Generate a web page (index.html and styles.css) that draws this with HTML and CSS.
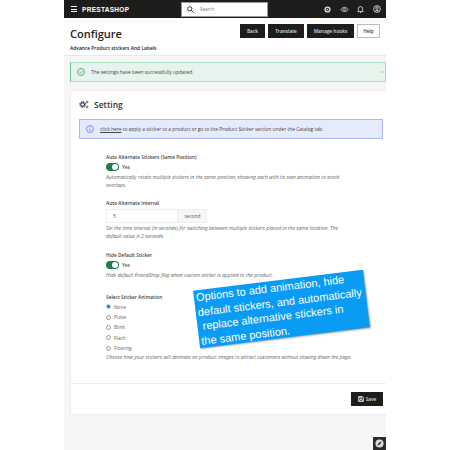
FILE: index.html
```html
<!DOCTYPE html>
<html lang="en">
<head>
    <meta charset="UTF-8">
    <title>Configure</title>
    <link rel="stylesheet" href="styles.css">
</head>
<body>
    <div class="shot">
        <div class="topbar">
            <div class="burger"><span></span><span></span><span></span></div>
            <div class="logo">PRESTASHOP</div>
            <div class="search">
                <svg width="7" height="7" viewBox="0 0 10 10" fill="none" stroke="#333" stroke-width="1.4"><circle cx="4" cy="4" r="3"/><path d="M6.2 6.2L9.5 9.5"/></svg>
                <span>Search</span>
            </div>
            <div class="top-icons">
                <svg width="7" height="7" viewBox="0 0 10 10"><circle cx="5" cy="5" r="3.4" fill="none" stroke="#ddd" stroke-width="2"/><circle cx="5" cy="5" r="1.2" fill="#ddd"/></svg>
                <svg width="9" height="7" viewBox="0 0 12 10" fill="none" stroke="#ddd" stroke-width="1.2"><path d="M1 5c2-4 8-4 10 0c-2 4-8 4-10 0z"/><circle cx="6" cy="5" r="1.6"/></svg>
                <svg width="7" height="8" viewBox="0 0 10 11" fill="none" stroke="#ddd" stroke-width="1.2"><path d="M2 8V5a3 3 0 0 1 6 0v3l1 1H1z"/><path d="M4 10.5h2"/></svg>
                <svg width="8" height="8" viewBox="0 0 10 10" fill="none" stroke="#ddd" stroke-width="1.1"><circle cx="5" cy="5" r="4.2"/><circle cx="5" cy="4" r="1.5"/><path d="M2.5 8c1-1.6 4-1.6 5 0"/></svg>
            </div>
        </div>

        <div class="head">
            <div>
                <h1>Configure</h1>
                <div class="subtitle">Advance Product stickers And Labels</div>
            </div>
            <div class="head-btns">
                <a class="btn btn-back">Back</a>
                <a class="btn btn-translate">Translate</a>
                <a class="btn btn-hooks">Manage hooks</a>
                <a class="btn btn-help">Help</a>
            </div>
        </div>

        <div class="alert">
            <svg width="8" height="8" viewBox="0 0 10 10" fill="none" stroke="#3a9c68" stroke-width="1"><circle cx="5" cy="5" r="4.3"/><path d="M3 5l1.5 1.5L7 3.8"/></svg>
            <span>The settings have been successfully updated.</span>
            <span class="alert-close">×</span>
        </div>

        <div class="card">
            <div class="card-title">
                <svg width="10" height="9" viewBox="0 0 11 10" fill="none" stroke="#333">
                    <circle cx="4" cy="5" r="2.100" stroke-width="1.300"/>
                    <circle cx="4" cy="5" r="3.300" stroke-width="1.100" stroke-dasharray="1.300 1.290"/>
                    <circle cx="9" cy="2.200" r="1" stroke-width="0.800"/>
                    <circle cx="9" cy="7.800" r="1" stroke-width="0.800"/>
                </svg>
                <span>Setting</span>
            </div>

            <div class="info">
                <svg width="8" height="8" viewBox="0 0 10 10" fill="none" stroke="#5c78e8" stroke-width="1"><circle cx="5" cy="5" r="4.3"/><path d="M5 4.5v3M5 2.5v1"/></svg>
                <span><u>click here</u> to apply a sticker to a product or go to the Product Sticker section under the Catalog tab.</span>
            </div>

            <div class="form">
                <div class="field field-first">
                    <div class="label">Auto Alternate Stickers (Same Position)</div>
                    <div class="switch-row"><span class="switch"></span><span>Yes</span></div>
                    <p class="help">Automatically rotate multiple stickers in the same position, showing each with its own animation to avoid overlaps.</p>
                </div>

                <div class="field field-interval">
                    <div class="label">Auto Alternate Interval</div>
                    <div class="input-group">
                        <div class="input">5</div>
                        <div class="addon">second</div>
                    </div>
                    <p class="help">Set the time interval (in seconds) for switching between multiple stickers placed in the same location. The default value is 2 seconds.</p>
                </div>

                <div class="field field-hide">
                    <div class="label">Hide Default Sticker</div>
                    <div class="switch-row"><span class="switch"></span><span>Yes</span></div>
                    <p class="help">Hide default PrestaShop flag when custom sticker is applied to the product.</p>
                </div>

                <div class="field field-anim">
                    <div class="label">Select Sticker Animation</div>
                    <div class="radios">
                        <div class="radio-row"><span class="radio radio-on"></span>None</div>
                        <div class="radio-row"><span class="radio"></span>Pulse</div>
                        <div class="radio-row"><span class="radio"></span>Blink</div>
                        <div class="radio-row"><span class="radio"></span>Flash</div>
                        <div class="radio-row"><span class="radio"></span>Floating</div>
                    </div>
                    <p class="help">Choose how your stickers will animate on product images to attract customers without slowing down the page.</p>
                </div>
            </div>

            <div class="card-foot">
                <a class="btn btn-save">
                    <svg width="6" height="6" viewBox="0 0 10 10" fill="none" stroke="#fff" stroke-width="1.3"><path d="M1 1h6.5L9 2.500V9H1z"/><path d="M3 1v2.500h3.500V1M3 9V6h4v3"/></svg>
                    Save
                </a>
            </div>
        </div>

        <div class="note">Options to add animation, hide<br>default stickers, and automatically<br>&nbsp;replace alternative stickers in<br>the same position.</div>

        <div class="corner">
            <svg width="9" height="9" viewBox="0 0 10 10"><circle cx="5" cy="5" r="4.500" fill="#ddd"/><path d="M7.500 2.500L5.800 5.800L2.500 7.500L4.200 4.200z" fill="#333"/></svg>
        </div>
    </div>
</body>
</html>
```

FILE: styles.css
```css
body {
    margin: 0;
    background-color: #fff;
    font-family: "Open Sans", "Liberation Sans", sans-serif;
    color: #333;
}

.shot {
    position: relative;
    width: 322px;
    height: 450px;
    margin-left: 64px;
    overflow: hidden;
    background-color: #f6f6f6;
}

/* top bar */
.topbar {
    display: flex;
    align-items: center;
    height: 18px;
    background-color: #1d1d1b;
    color: #fff;
}

.burger {
    display: flex;
    flex-direction: column;
    gap: 1.500px;
    width: 6px;
    margin-left: 7px;
}

.burger span {
    height: 1px;
    background-color: #fff;
}

.logo {
    margin-left: 5px;
    width: 48px;
    font-family: "Liberation Sans", sans-serif;
    font-size: 6.500px;
    font-weight: bold;
    letter-spacing: 0.300px;
}

.search {
    display: flex;
    align-items: center;
    gap: 6px;
    box-sizing: border-box;
    width: 87px;
    height: 15px;
    margin-left: 51px;
    padding-left: 5px;
    background-color: #fff;
    border: 1px solid #999;
    font-size: 4.500px;
    color: #777;
}

.top-icons {
    display: flex;
    align-items: center;
    gap: 8.500px;
    margin-left: 56px;
}

/* page header */
.head {
    display: flex;
    justify-content: space-between;
    box-sizing: border-box;
    height: 38px;
    padding: 6px 6px 0 6px;
    background-color: #fff;
    border-bottom: 1px solid #e8e8e8;
}

h1 {
    margin: 0;
    font-size: 11px;
    line-height: 20px;
    font-weight: 600;
    color: #222;
}

.subtitle {
    font-size: 4.900px;
    line-height: 8px;
    font-weight: 600;
    color: #222;
}

.head-btns {
    display: flex;
    gap: 3px;
}

.btn {
    display: flex;
    align-items: center;
    justify-content: center;
    box-sizing: border-box;
    height: 14px;
    background-color: #1d1d1b;
    color: #ddd;
    font-size: 4.800px;
    font-weight: 600;
}

.btn-back { width: 25px; }
.btn-translate { width: 36px; }
.btn-hooks { width: 47px; }

.btn-help {
    width: 23px;
    background-color: #fff;
    border: 1px solid #bbb;
    color: #444;
}

/* success message */
.alert {
    display: flex;
    align-items: center;
    box-sizing: border-box;
    height: 20px;
    margin: 6px 0 0 6px;
    padding-left: 6px;
    background-color: #e5f5ed;
    border: 1px solid #a8dcc0;
    border-left: 1px solid #6cc095;
    font-size: 4.900px;
    color: #444;
}

.alert span:first-of-type {
    margin-left: 6px;
}

.alert-close {
    margin-left: auto;
    margin-right: 1px;
    color: #aaa;
    font-size: 6px;
}

/* settings card */
.card {
    box-sizing: border-box;
    height: 325px;
    margin: 8px 0 0 6px;
    background-color: #fff;
    border: 1px solid #eee;
    border-right: none;
}

.card-title {
    display: flex;
    align-items: center;
    gap: 5px;
    height: 27px;
    padding: 0 0 1px 8px;
    font-size: 8.500px;
    font-weight: 600;
    color: #333;
}

.info {
    display: flex;
    align-items: center;
    gap: 6px;
    box-sizing: border-box;
    width: 304px;
    height: 20px;
    margin-left: 8px;
    padding-left: 6px;
    background-color: #e6eafd;
    border: 1px solid #a9b8f5;
    font-size: 4.880px;
    color: #444;
}

.form {
    box-sizing: border-box;
    height: 245px;
    padding-left: 35px;
    border-bottom: 1px solid #eee;
}

.field-first { padding-top: 15px; }
.field-interval { padding-top: 11px; }
.field-hide { padding-top: 12px; }
.field-anim { padding-top: 14px; }

.label {
    font-size: 4.800px;
    line-height: 7px;
    font-weight: 600;
    color: #444;
}

.switch-row {
    display: flex;
    align-items: center;
    gap: 3px;
    height: 10px;
    margin-top: 1px;
    font-size: 4.800px;
    font-weight: 600;
    color: #555;
}

.switch {
    position: relative;
    display: block;
    width: 13px;
    height: 8px;
    border-radius: 4px;
    background-color: #1f7d4e;
}

.switch::after {
    content: "";
    position: absolute;
    top: 1px;
    right: 1px;
    width: 6px;
    height: 6px;
    border-radius: 50%;
    background-color: #fff;
}

.help {
    width: 238px;
    margin: 2px 0 0;
    font-size: 5.050px;
    line-height: 7.500px;
    font-style: italic;
    color: #666;
}

.field-anim .help {
    width: 270px;
    margin-top: 1px;
}

.input-group {
    display: flex;
    height: 14px;
    margin-top: 2px;
}

.input {
    box-sizing: border-box;
    width: 72px;
    padding-left: 6px;
    background-color: #fff;
    border: 1px solid #eee;
    font-size: 5px;
    line-height: 12px;
    color: #555;
}

.addon {
    box-sizing: border-box;
    width: 29px;
    background-color: #f6f6f6;
    border: 1px solid #eee;
    text-align: center;
    font-size: 4.800px;
    line-height: 12px;
    color: #555;
}

.radios {
    margin-top: 1px;
}

.radio-row {
    display: flex;
    align-items: center;
    gap: 3px;
    height: 10.400px;
    font-size: 4.800px;
    color: #666;
}

.radio {
    box-sizing: border-box;
    width: 5px;
    height: 5px;
    border-radius: 50%;
    background-color: #fff;
    border: 0.500px solid #999;
}

.radio-on {
    background-color: #2f6fd8;
    border: 1px solid #bcd3f5;
}

.card-foot {
    display: flex;
    justify-content: flex-end;
    padding: 8px 3px 0 0;
}

.btn-save {
    gap: 2px;
    width: 32px;
}

/* callout laid over the form */
.note {
    position: absolute;
    top: 280px;
    left: 131.500px;
    box-sizing: border-box;
    width: 171px;
    height: 58px;
    padding: 0 0 0 2px;
    background-color: #0a9cf5;
    box-shadow: 1px 1px 2px rgba(0,0,0,0.35);
    transform: rotate(-7deg);
    font-family: "Liberation Sans", sans-serif;
    font-size: 11px;
    line-height: 14.700px;
    white-space: nowrap;
    color: #fff;
}

.corner {
    position: absolute;
    right: 0;
    bottom: 0;
    display: flex;
    align-items: center;
    justify-content: center;
    width: 13px;
    height: 13px;
    background-color: #2b2b2b;
}
```
